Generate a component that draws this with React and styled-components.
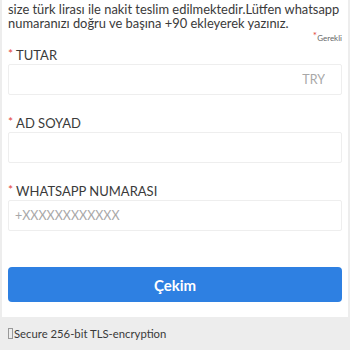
import React from "react";
import styled, { createGlobalStyle } from "styled-components";

const GlobalStyle = createGlobalStyle`
  html, body {
    margin: 0;
    padding: 0;
    background: #ededed;
    font-family: Lato, "Open Sans", sans-serif;
    color: #3a3a3a;
  }
`;

const Page = styled.div`
  width: 350px;
  height: 350px;
  overflow: hidden;
  display: flex;
  flex-direction: column;
`;

const Card = styled.div`
  background: #fff;
  margin: 0 2px;
  padding: 3px 6px 15px;
  display: flex;
  flex-direction: column;
`;

const Info = styled.p`
  margin: 0;
  font-size: 12.9px;
  line-height: 13.5px;
  color: #3a3a3a;
  white-space: nowrap;
`;

const Required = styled.div`
  align-self: flex-end;
  margin-top: 0;
  font-size: 8px;
  color: #666;
  line-height: 10px;
  span {
    color: #e2453c;
    font-size: 10px;
    vertical-align: 2px;
  }
`;

const Field = styled.div`
  display: flex;
  flex-direction: column;
  margin-top: ${(p) => p.$gap}px;
`;

const Label = styled.label`
  font-size: 13px;
  line-height: 16px;
  color: #3a3a3a;
  margin-bottom: 1px;
  span {
    color: #e2453c;
    font-size: 12px;
    margin-right: 3px;
    vertical-align: 2px;
  }
`;

const Input = styled.input`
  box-sizing: border-box;
  width: 100%;
  height: 31px;
  border: 1px solid #eeeeee;
  border-radius: 2px;
  padding: 0 16px 0 6px;
  font-family: Lato, "Open Sans", sans-serif;
  font-size: 12.5px;
  color: #3a3a3a;
  text-align: ${(p) => (p.$right ? "right" : "left")};
  outline: none;
  &::placeholder {
    color: #a8a8a8;
  }
`;

const Button = styled.button`
  margin-top: 36px;
  height: 35px;
  border: none;
  border-radius: 4px;
  background: #2e80e2;
  color: #fff;
  font-family: Lato, "Open Sans", sans-serif;
  font-size: 15px;
  font-weight: 700;
`;

const Footer = styled.div`
  flex: 1;
  background: #ededed;
  display: flex;
  align-items: center;
  padding: 0 8px;
  font-size: 11.3px;
  color: #3a3a3a;
`;

const Tofu = styled.span`
  display: inline-block;
  width: 3px;
  height: 9px;
  border: 1px solid #999;
  margin-right: 1px;
`;

export default function App() {
  return (
    <Page>
      <GlobalStyle />
      <Card>
        <Info>
          size türk lirası ile nakit teslim edilmektedir.Lütfen whatsapp
          <br />
          numaranızı doğru ve başına +90 ekleyerek yazınız.
        </Info>
        <Required>
          <span>*</span>Gerekli
        </Required>
        <Field $gap={3}>
          <Label>
            <span>*</span>TUTAR
          </Label>
          <Input $right placeholder="TRY" />
        </Field>
        <Field $gap={19}>
          <Label>
            <span>*</span>AD SOYAD
          </Label>
          <Input />
        </Field>
        <Field $gap={19}>
          <Label>
            <span>*</span>WHATSAPP NUMARASI
          </Label>
          <Input placeholder="+XXXXXXXXXXXX" />
        </Field>
        <Button>Çekim</Button>
      </Card>
      <Footer>
        <Tofu />
        Secure 256-bit TLS-encryption
      </Footer>
    </Page>
  );
}
